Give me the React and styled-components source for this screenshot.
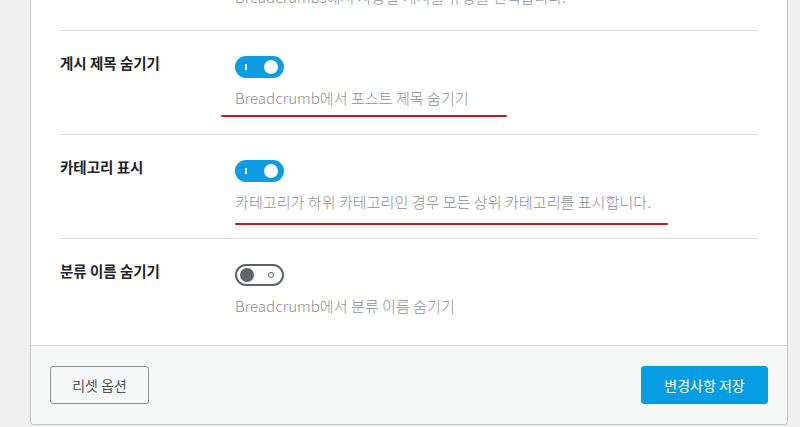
import React from "react";
import styled, { createGlobalStyle } from "styled-components";

const GlobalStyle = createGlobalStyle`
  body {
    margin: 0;
    background: #f0f0f1;
    font-family: "Noto Sans CJK KR", "Noto Sans", sans-serif;
  }
`;

const options = [
  {
    id: "hide-title",
    label: "게시 제목 숨기기",
    desc: "Breadcrumb에서 포스트 제목 숨기기",
    on: true,
    mark: { left: -14, width: 286, gap: 8 },
  },
  {
    id: "show-category",
    label: "카테고리 표시",
    desc: "카테고리가 하위 카테고리인 경우 모든 상위 카테고리를 표시합니다.",
    on: true,
    mark: { left: 0, width: 433, gap: 12 },
  },
  {
    id: "hide-taxonomy",
    label: "분류 이름 숨기기",
    desc: "Breadcrumb에서 분류 이름 숨기기",
    on: false,
  },
];

const App = () => {
  const [values, setValues] = React.useState(
    Object.fromEntries(options.map((o) => [o.id, o.on]))
  );

  const toggle = (id) => setValues((v) => ({ ...v, [id]: !v[id] }));

  return (
    <React.Fragment>
      <GlobalStyle />
      <Page>
        <Card>
          <Body>
            <TopRest>
              <Desc>Breadcrumbs에서 사용할 게시물 유형을 선택합니다.</Desc>
            </TopRest>
            {options.map((o) => (
              <Row key={o.id}>
                <Label>{o.label}</Label>
                <Field>
                  <Switch
                    type="button"
                    $on={values[o.id]}
                    onClick={() => toggle(o.id)}
                  >
                    <OnMark $on={values[o.id]} />
                    <Knob $on={values[o.id]} />
                    <OffMark $on={values[o.id]} />
                  </Switch>
                  <Desc>
                    {o.desc}
                    {o.mark && (
                      <RedLine
                        $left={o.mark.left}
                        $width={o.mark.width}
                        $gap={o.mark.gap}
                      />
                    )}
                  </Desc>
                </Field>
              </Row>
            ))}
          </Body>
          <Footer>
            <ResetButton type="button">리셋 옵션</ResetButton>
            <SaveButton type="button">변경사항 저장</SaveButton>
          </Footer>
        </Card>
      </Page>
    </React.Fragment>
  );
};

const Page = styled.div`
  padding: 0 12px 0 30px;
  margin-top: -14px;
  height: 441px;
  overflow: hidden;
  box-sizing: border-box;
`;

const Card = styled.div`
  background: #fff;
  border: 1px solid #c3c4c7;
  border-top: none;
  border-radius: 0 0 4px 4px;
  overflow: hidden;
`;

const Body = styled.div`
  padding: 0 29px;
`;

const TopRest = styled.div`
  padding: 0 0 24px 175px;
`;

const Row = styled.div`
  display: flex;
  border-top: 1px solid #dcdcde;
  padding: 25px 0 27px;

  &:last-child {
    padding-bottom: 30px;
  }
`;

const Label = styled.div`
  width: 175px;
  flex-shrink: 0;
  margin-top: -2px;
  font-size: 14.5px;
  font-weight: 700;
  line-height: 17px;
  color: #1d2327;
`;

const Field = styled.div`
  display: flex;
  flex-direction: column;
  align-items: flex-start;
  gap: 9px;
`;

const Switch = styled.button`
  position: relative;
  width: 49px;
  height: 22px;
  padding: 0;
  border-radius: 11px;
  box-sizing: border-box;
  cursor: pointer;
  border: 2px solid ${(p) => (p.$on ? "#0d9de3" : "#5f6468")};
  background: ${(p) => (p.$on ? "#0d9de3" : "#fff")};
`;

const Knob = styled.span`
  position: absolute;
  top: 2px;
  left: ${(p) => (p.$on ? "27px" : "3px")};
  width: 14px;
  height: 14px;
  border-radius: 50%;
  background: ${(p) => (p.$on ? "#fff" : "#5f6468")};
`;

const OnMark = styled.span`
  display: ${(p) => (p.$on ? "block" : "none")};
  position: absolute;
  top: 6px;
  left: 8px;
  width: 2px;
  height: 6px;
  background: #fff;
`;

const OffMark = styled.span`
  display: ${(p) => (p.$on ? "none" : "block")};
  position: absolute;
  top: 6px;
  right: 8px;
  width: 6px;
  height: 6px;
  box-sizing: border-box;
  border: 1.5px solid #5f6468;
  border-radius: 50%;
`;

const Desc = styled.p`
  position: relative;
  margin: 0;
  font-size: 15.1px;
  font-weight: 300;
  line-height: 20px;
  color: #8c8f94;
  white-space: nowrap;
`;

const RedLine = styled.span`
  position: absolute;
  left: ${(p) => p.$left}px;
  top: ${(p) => 20 + p.$gap}px;
  width: ${(p) => p.$width}px;
  height: 2px;
  border-radius: 1px;
  background: #c8161d;
`;

const Footer = styled.div`
  display: flex;
  justify-content: space-between;
  align-items: center;
  padding: 20px 19px 20px 19px;
  background: #f6f7f7;
  border-top: 1px solid #dcdcde;
`;

const ButtonBase = styled.button`
  height: 38px;
  border-radius: 3px;
  font-family: "Noto Sans CJK KR", "Noto Sans", sans-serif;
  font-size: 14px;
  cursor: pointer;
`;

const ResetButton = styled(ButtonBase)`
  width: 99px;
  background: #f6f7f7;
  border: 1px solid #8c8f94;
  color: #50575e;
`;

const SaveButton = styled(ButtonBase)`
  width: 127px;
  background: #079de3;
  border: 1px solid #079de3;
  color: #fff;
`;

export default App;
